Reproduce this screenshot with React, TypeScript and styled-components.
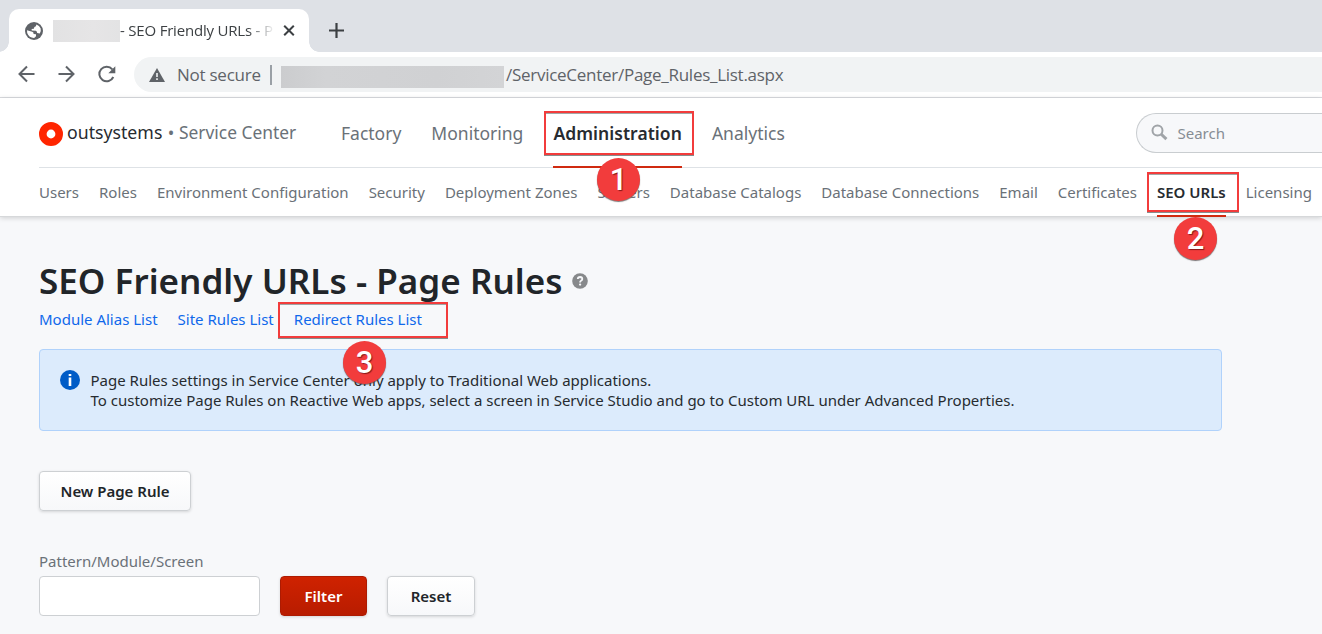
import React from 'react';
import styled, { createGlobalStyle } from 'styled-components';

const Global = createGlobalStyle`
  * { box-sizing: border-box; }
  html, body { margin: 0; padding: 0; }
  body {
    background: #f7f8fa;
    font-family: 'Noto Sans', sans-serif;
    font-size: 15px;
    color: #272b30;
    overflow: hidden;
  }
`;

const Page = styled.div`
  width: 1322px;
  height: 634px;
  overflow: hidden;
  background: #f7f8fa;
`;

/* Browser chrome */
const TabStrip = styled.div`
  height: 52px;
  background: #dee1e6;
  display: flex;
  align-items: flex-end;
  padding-left: 9px;
  font-family: 'Open Sans', sans-serif;
`;

const Tab = styled.div`
  position: relative;
  width: 300px;
  height: 43px;
  background: #fff;
  border-radius: 10px 10px 0 0;
  display: flex;
  align-items: center;
  padding: 0 13px 0 16px;

  &::before,
  &::after {
    content: '';
    position: absolute;
    bottom: 0;
    width: 10px;
    height: 10px;
  }
  &::before {
    left: -10px;
    background: radial-gradient(circle at 0 0, #dee1e6 9.5px, #fff 10px);
  }
  &::after {
    right: -10px;
    background: radial-gradient(circle at 100% 0, #dee1e6 9.5px, #fff 10px);
  }
`;

const TabMask = styled.span`
  width: 67px;
  height: 22px;
  margin-left: 10px;
  background: linear-gradient(90deg, #e2e2e3, #e6e5e6 60%, #e3e3e4);
`;

const TabTitle = styled.span`
  width: 153px;
  overflow: hidden;
  white-space: nowrap;
  font-size: 15px;
  line-height: 22px;
  letter-spacing: -0.2px;
  margin-top: -2px;
  color: #3c4043;
  mask-image: linear-gradient(90deg, #000 128px, transparent 155px);
`;

const CloseIcon = styled.svg`
  margin-left: auto;
`;

const PlusIcon = styled.svg`
  margin: 0 0 14px 20px;
`;

const Toolbar = styled.div`
  height: 46px;
  background: #fff;
  border-bottom: 1px solid #dadce0;
  display: flex;
  align-items: center;
  padding-left: 17px;
  gap: 20px;
`;

const AddressBar = styled.div`
  height: 35px;
  flex: 1;
  margin-left: -3px;
  border-radius: 18px 0 0 18px;
  background: #f1f3f4;
  display: flex;
  align-items: center;
  padding-left: 15px;
  font-family: 'Open Sans', sans-serif;
  font-size: 17px;
  line-height: 24px;
  color: #5f6368;
  white-space: nowrap;
`;

const Security = styled.span`
  margin-left: 12px;
  width: 84px;
  letter-spacing: -0.25px;
`;

const Divider = styled.span`
  width: 2px;
  height: 20px;
  margin: 0 9px 0 9px;
  background: #9aa0a6;
`;

const UrlMask = styled.span`
  width: 223px;
  height: 22px;
  margin-top: 4px;
  background: linear-gradient(90deg, #cbccce, #d2d3d5 20%, #d0d1d3 70%, #d3d4d6);
`;

const Url = styled.span`
  margin-left: 2px;
  letter-spacing: -0.27px;
`;

/* Application header */
const Header = styled.header`
  background: #fff;
  padding-left: 39px;
  height: 119px;
  border-bottom: 1px solid #d6d8da;
  box-shadow: 0 1px 5px rgba(0, 0, 0, 0.17);
  white-space: nowrap;
  position: relative;
`;

const TopRow = styled.div`
  height: 70px;
  border-bottom: 1px solid #dee2e6;
  display: flex;
  align-items: center;
`;

const Brand = styled.div`
  width: 302px;
  display: flex;
  align-items: center;
  font-size: 17.7px;
  line-height: 24px;
  color: #272b30;
  margin-top: 2px;
`;

const BrandName = styled.span`
  margin-left: 4px;
  margin-top: -3px;
`;

const BrandProduct = styled.span`
  color: #6a7178;
  font-size: 17.4px;
  margin-left: 5.5px;
  margin-top: -3px;
`;

const MainNav = styled.nav`
  display: flex;
  gap: 30px;
  height: 70px;
`;

const NavItem = styled.a<{ $active?: boolean }>`
  position: relative;
  font-size: 17.5px;
  line-height: 70px;
  height: 70px;
  color: ${p => (p.$active ? '#272b30' : '#6a7178')};
  font-weight: ${p => (p.$active ? 600 : 400)};
  letter-spacing: ${p => (p.$active ? '0.05px' : 'normal')};
  border-bottom: 2px solid ${p => (p.$active ? '#d02a10' : 'transparent')};
`;

const SearchBox = styled.div`
  margin-left: auto;
  width: 186px;
  height: 40px;
  border: 1px solid #c9cdd0;
  border-right: 0;
  border-radius: 20px 0 0 20px;
  background: #f7f8fa;
  display: flex;
  align-items: center;
  padding-left: 14px;
  gap: 9.5px;
  color: #868d94;
`;

const SubNav = styled.nav`
  display: flex;
  gap: 20px;
  height: 49px;
`;

const SubItem = styled.a<{ $active?: boolean }>`
  position: relative;
  height: 49px;
  line-height: 49px;
  color: ${p => (p.$active ? '#272b30' : '#6a7178')};
  font-weight: ${p => (p.$active ? 600 : 400)};
  border-bottom: 2px solid ${p => (p.$active ? '#d02a10' : 'transparent')};
`;

/* Tutorial callouts drawn over the interface */
const Highlight = styled.span<{ $x: number; $y: number; $w: number; $h: number }>`
  position: absolute;
  left: ${p => p.$x}px;
  top: ${p => p.$y}px;
  width: ${p => p.$w}px;
  height: ${p => p.$h}px;
  border: 2px solid #f23c3c;
  box-shadow: 0 1px 0 rgba(70, 80, 80, 0.65), inset 0 1px 0 rgba(70, 80, 80, 0.5);
  z-index: 2;
`;

const Badge = styled.span<{ $x: number; $y: number }>`
  position: absolute;
  left: ${p => p.$x}px;
  top: ${p => p.$y}px;
  width: 43px;
  height: 43px;
  border-radius: 50%;
  background: #f23c3c;
  color: #fff;
  font: 500 31px/43px Roboto, sans-serif;
  text-align: center;
  text-shadow: 1px 1px 1px rgba(60, 0, 0, 0.6);
  box-shadow: 0 1px 1px rgba(70, 60, 60, 0.7);
  z-index: 3;
`;

/* Content */
const Content = styled.main`
  padding: 41px 100px 0 39px;
`;

const TitleRow = styled.div`
  display: flex;
  align-items: center;
  height: 46px;
`;

const Title = styled.h1`
  margin: 0;
  font-size: 35px;
  line-height: 46px;
  letter-spacing: 0.03px;
  font-weight: 600;
  color: #212529;
  white-space: nowrap;
`;

const HelpIcon = styled.svg`
  margin: -1px 0 0 9px;
`;

const Links = styled.div`
  position: relative;
  display: flex;
  gap: 20px;
  height: 24px;
  margin-top: 3px;
  line-height: 24px;
  white-space: nowrap;
`;

const Link = styled.a`
  color: #1068eb;
`;

const Notice = styled.div`
  margin-top: 18px;
  height: 82px;
  border: 1px solid #b0d2fb;
  border-radius: 4px;
  background: #dcebfc;
  display: flex;
  padding: 20px;
  line-height: 20px;
  white-space: nowrap;
  gap: 10.5px;
`;

const Button = styled.button<{ $primary?: boolean; $width: number }>`
  width: ${p => p.$width}px;
  height: 40px;
  padding: 0;
  border-radius: 4px;
  border: 1px solid ${p => (p.$primary ? '#ad1b02' : '#cdd0d3')};
  background: ${p =>
    p.$primary ? 'linear-gradient(#cf2200, #b81c00)' : 'linear-gradient(#fff, #f7f8fa)'};
  color: ${p => (p.$primary ? '#fff' : '#212529')};
  font: 600 15px/20px 'Noto Sans', sans-serif;
  box-shadow: 0 1px 3px rgba(0, 0, 0, 0.14);
`;

const Actions = styled.div`
  display: flex;
  margin-top: 40px;
`;

const Label = styled.label`
  display: block;
  margin-top: 40px;
  line-height: 20px;
  color: #6a7178;
`;

const FilterRow = styled.div`
  display: flex;
  gap: 20px;
  margin-top: 5px;
`;

const Input = styled.input`
  width: 221px;
  height: 40px;
  border: 1px solid #cdd0d3;
  border-radius: 4px;
  background: #fff;
`;

const mainItems = ['Factory', 'Monitoring', 'Administration', 'Analytics'];
const subItems = [
  'Users', 'Roles', 'Environment Configuration', 'Security', 'Deployment Zones', 'Servers',
  'Database Catalogs', 'Database Connections', 'Email', 'Certificates', 'SEO URLs', 'Licensing',
];

export default function App() {
  return (
    <Page>
      <Global />
      <TabStrip>
        <Tab>
          <svg width="18" height="18" viewBox="0 0 18 18">
            <circle cx="9" cy="9" r="9" fill="#5f6368" />
            <path
              d="M2 8.2 L7.2 9.8 Q8.8 10.4 8.6 12 L11 12.2 L11 14.2 Q9.5 15.8 9 16 Q4 15.8 2.2 11 Z M11.4 2.4 Q11.4 4.6 9.4 5 L8.8 6.8 L6.6 7 L6.8 8.6 L10.8 8.8 Q12 9 12.2 11 L14.8 11.4 Q16.4 9 15.6 6.2 Q14.4 3.4 11.4 2.4 Z"
              fill="#fff"
            />
          </svg>
          <TabMask />
          <TabTitle>- SEO Friendly URLs - Pa</TabTitle>
          <CloseIcon width="14" height="14" viewBox="0 0 14 14">
            <path d="M2.2 1.7 L11.8 11.3 M11.8 1.7 L2.2 11.3" stroke="#3c4043" strokeWidth="2" />
          </CloseIcon>
        </Tab>
        <PlusIcon width="15" height="15" viewBox="0 0 15 15">
          <path d="M7.5 0 V15 M0 7.5 H15" stroke="#3c4043" strokeWidth="2.2" />
        </PlusIcon>
      </TabStrip>
      <Toolbar>
        <svg width="20" height="20" viewBox="0 0 20 20" fill="none" stroke="#5f6368" strokeWidth="2">
          <path d="M17.5 9 H3 M10 1.5 L2.5 9 L10 16.5" />
        </svg>
        <svg width="20" height="20" viewBox="0 0 20 20" fill="none" stroke="#5f6368" strokeWidth="2">
          <path d="M1.5 9 H16 M9 1.5 L16.5 9 L9 16.5" />
        </svg>
        <svg width="20" height="20" viewBox="0 0 20 20" fill="none" stroke="#5f6368" strokeWidth="2">
          <path d="M15.3 4.4 A7.3 7.3 0 1 0 16.3 12" />
          <path d="M18.3 1.2 V8.2 H11.3 Z" fill="#5f6368" stroke="none" />
        </svg>
        <AddressBar>
          <svg width="16" height="14" viewBox="0 0 16 14">
            <path d="M8 0 L16 14 H0 Z" fill="#5f6368" />
            <path d="M8 5 V9 M8 10.3 V12" stroke="#f1f3f4" strokeWidth="1.6" />
          </svg>
          <Security>Not secure</Security>
          <Divider />
          <UrlMask />
          <Url>/ServiceCenter/Page_Rules_List.aspx</Url>
        </AddressBar>
      </Toolbar>

      <Header>
        <TopRow>
          <Brand>
            <svg width="24" height="24" viewBox="0 0 24 24">
              <circle cx="12" cy="12" r="8.2" fill="none" stroke="#ff2500" strokeWidth="7.6" />
            </svg>
            <BrandName>outsystems</BrandName>
            <BrandProduct>• Service Center</BrandProduct>
          </Brand>
          <MainNav>
            {mainItems.map(item => (
              <NavItem key={item} $active={item === 'Administration'}>{item}</NavItem>
            ))}
          </MainNav>
          <SearchBox>
            <svg width="17" height="17" viewBox="0 0 17 17" fill="none" stroke="#a0a4a8">
              <circle cx="6.5" cy="6.5" r="5" strokeWidth="2" />
              <path d="M10 10 L15.4 15.2" strokeWidth="3" />
            </svg>
            Search
          </SearchBox>
        </TopRow>
        <SubNav>
          {subItems.map(item => (
            <SubItem key={item} $active={item === 'SEO URLs'}>{item}</SubItem>
          ))}
        </SubNav>
        <Highlight $x={544} $y={13} $w={150} $h={44} />
        <Badge $x={597} $y={60}>1</Badge>
        <Highlight $x={1147} $y={74} $w={92} $h={40} />
        <Badge $x={1174} $y={119}>2</Badge>
      </Header>

      <Content>
        <TitleRow>
          <Title>SEO Friendly URLs - Page Rules</Title>
          <HelpIcon width="16" height="16" viewBox="0 0 16 16">
            <circle cx="8" cy="8" r="7.8" fill="#87898b" />
            <path
              d="M5.8 6 Q5.9 4 8.1 4 Q10.3 4.1 10.3 5.9 Q10.3 7 9 7.8 Q8.1 8.3 8.1 9.4"
              fill="none" stroke="#f7f8fa" strokeWidth="1.8"
            />
            <circle cx="8.1" cy="11.6" r="1.15" fill="#f7f8fa" />
          </HelpIcon>
        </TitleRow>
        <Links>
          <Link>Module Alias List</Link>
          <Link>Site Rules List</Link>
          <Link>Redirect Rules List</Link>
          <Highlight $x={239} $y={-5} $w={170} $h={36} />
          <Badge $x={304} $y={34}>3</Badge>
        </Links>
        <Notice>
          <svg width="20" height="20" viewBox="0 0 20 20">
            <circle cx="10" cy="10" r="10" fill="#005cc7" />
            <path d="M8.7 4 H11.3 V6 H8.7 Z M8.7 7.5 H11.3 V16 H8.7 Z" fill="#fff" />
          </svg>
          <div>
            Page Rules settings in Service Center only apply to Traditional Web applications.
            <br />
            To customize Page Rules on Reactive Web apps, select a screen in Service Studio and go to Custom URL under Advanced Properties.
          </div>
        </Notice>
        <Actions>
          <Button $width={152}>New Page Rule</Button>
        </Actions>
        <Label>Pattern/Module/Screen</Label>
        <FilterRow>
          <Input />
          <Button $primary $width={87}>Filter</Button>
          <Button $width={88}>Reset</Button>
        </FilterRow>
      </Content>
    </Page>
  );
}
